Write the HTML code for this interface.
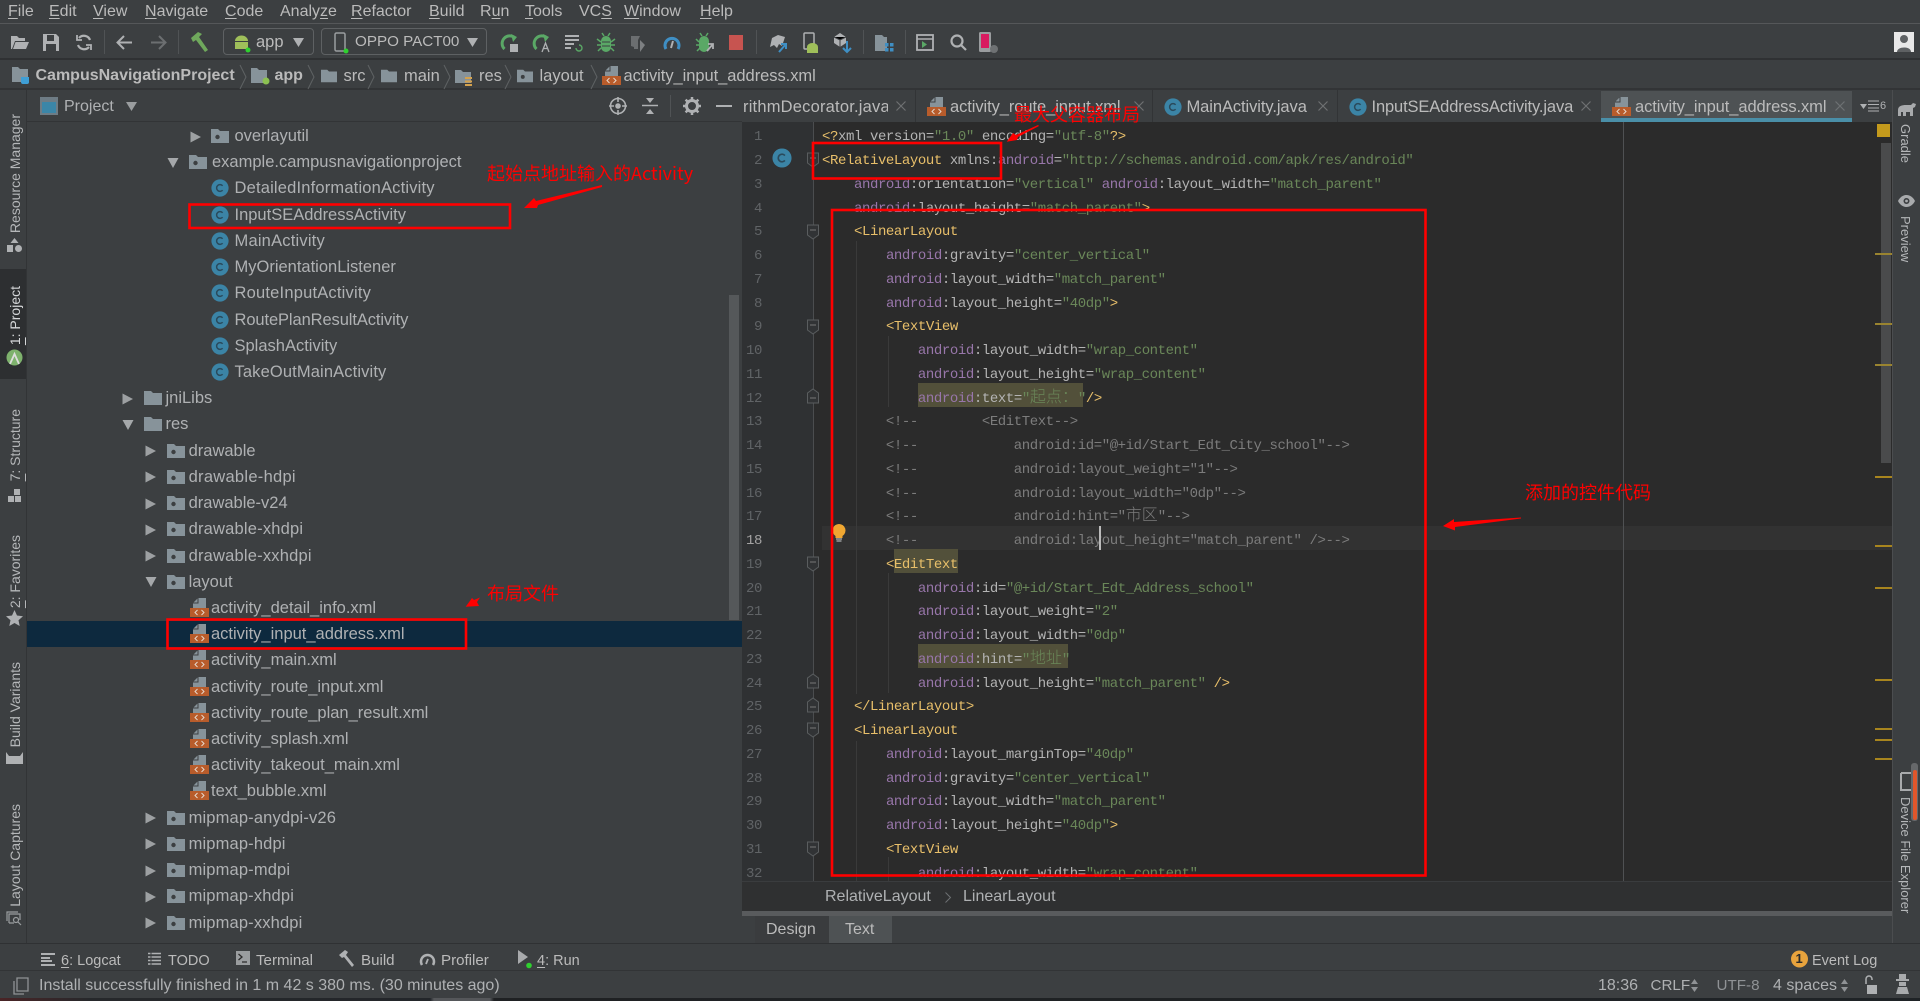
<!DOCTYPE html>
<html lang="zh"><head><meta charset="utf-8"><title>CampusNavigationProject</title>
<style>
html,body{margin:0;padding:0;background:#3c3f41;}
body{width:1920px;height:1001px;position:relative;overflow:hidden;font-family:"Liberation Sans","Noto Sans CJK SC",sans-serif;color:#bbbbbb;font-size:16px;}
.a{position:absolute;white-space:pre;}
.b{position:absolute;}
svg{position:absolute;overflow:visible;}
u{text-decoration:underline;text-underline-offset:2px;}
.mn{top:1px;line-height:21px;font-size:16px;color:#bbb;}
.nv{top:62px;line-height:28px;font-size:16.5px;color:#bbb;}
.nb{font-weight:bold;font-size:16px;}
.chev{top:66px;}
.tabt{top:93px;line-height:28px;font-size:16.5px;color:#bbb;letter-spacing:-.08px;}
.r{height:26.23px;line-height:26px;position:relative;font-size:16.5px;color:#afb1b3;white-space:pre;}
.r span{position:absolute;top:0;}
.r svg{top:4px;width:18px;height:18px;}
.r svg.ar{top:7.5px;width:12px;height:12px;}
.l1 .ar{left:122px}.l1 .ic{left:144px}.l1 span{left:165.5px}
.l2 .ar{left:145px}.l2 .ic{left:166.5px}.l2 span{left:188.6px}
.l3 .ar{left:167px}.l3 .ic{left:189px}.l3 span{left:212px}
.l4 .ar{left:190px}.l4 .ic{left:211px}.l4 span{left:234.5px}
.lx .ic{left:189.5px;top:3px;}.lx span{left:211px}
.sel{background:#0d293e;}
.code{position:absolute;left:822px;top:122.1px;width:1050px;height:759px;overflow:hidden;font-family:"Liberation Mono","Noto Sans CJK SC",monospace;font-size:14px;letter-spacing:-.41px;color:#b4b4b4;}
.l{height:23.76px;line-height:27px;white-space:pre;position:relative;top:2.4px;}
.g{color:#e8bf6a}.p{color:#9876aa}.v{color:#6a8759}.c{color:#7c7c7c}
.z{font-family:"Noto Sans CJK SC",sans-serif;font-size:16px;letter-spacing:0;font-weight:300;line-height:1px;}
.nums{position:absolute;left:730px;width:32px;top:122.1px;text-align:right;font-family:"Liberation Mono",monospace;font-size:14px;letter-spacing:-.4px;color:#606366;height:759px;overflow:hidden;}
.v1{position:absolute;writing-mode:vertical-rl;transform:rotate(180deg);white-space:pre;font-size:14px;color:#b5b7b9;line-height:20px;left:5px;}
.v2{position:absolute;writing-mode:vertical-rl;white-space:pre;font-size:13px;color:#b5b7b9;line-height:20px;left:1895px;}
.bt{top:948px;line-height:26px;font-size:14.5px;color:#bbb;}
.st{top:973px;line-height:26px;font-size:16px;color:#afb1b3;}
.ann{position:absolute;color:#f00;font-size:18px;line-height:22px;white-space:pre;font-family:"Noto Sans CJK SC",sans-serif;font-weight:400;}
.combo{position:absolute;top:28px;height:27px;border:1px solid #5e6163;border-radius:4px;box-sizing:border-box;}
.sep{position:absolute;width:1px;background:#505355;}
</style></head><body>
<svg width="0" height="0" style="position:absolute">
<defs>
<symbol id="ra" viewBox="0 0 12 12"><path d="M.5.5L11 6 .5 11.5z" fill="#9da0a2"/></symbol>
<symbol id="da" viewBox="0 0 12 12"><path d="M.5 1h11L6 11z" fill="#a5a8aa"/></symbol>
<symbol id="pk" viewBox="0 0 18 18"><path d="M0 2h7l2 2h9v12H0z" fill="#87939a"/><circle cx="6.5" cy="10" r="2.2" fill="#3c3f41"/></symbol>
<symbol id="fd" viewBox="0 0 18 18"><path d="M0 2h7l2 2h9v12H0z" fill="#87939a"/></symbol>
<symbol id="cl" viewBox="0 0 18 18"><circle cx="9" cy="9" r="8.6" fill="#3b84a6"/><path d="M11.6 6.8A3.4 3.4 0 1 0 11.6 11.2" fill="none" stroke="#2a4a5c" stroke-width="1.5"/></symbol>
<symbol id="xm" viewBox="0 0 19 19"><path d="M3 10V5l5-5h8v10z" fill="#87939a"/><path d="M3 5h5V0" fill="none" stroke="#3c3f41"/><rect y="10" width="19" height="9" fill="#b85c2b"/><path d="M7.5 12l-2.5 2.5 2.5 2.5M11.5 12l2.5 2.5-2.5 2.5" fill="none" stroke="#e6d8cc" stroke-width="1"/></symbol>
<symbol id="xx" viewBox="0 0 10 10"><path d="M.5.5l9 9M9.5.5l-9 9" stroke="#6e7173" stroke-width="1.2" fill="none"/></symbol>
<symbol id="fo" viewBox="0 0 14 16"><path d="M1.5 1v10l5.5 4 5.500-4V1z" fill="#313335" stroke="#5a5d5f"/><path d="M4 6h6" stroke="#777"/></symbol>
<symbol id="fc" viewBox="0 0 14 16"><path d="M1.5 15V5L7 1l5.500 4v10z" fill="#313335" stroke="#5a5d5f"/><path d="M4 10h6" stroke="#777"/></symbol>
<symbol id="ch" viewBox="0 0 8 26"><path d="M1 1l6 12-6 12" fill="none" stroke="#5f6264" stroke-width="1"/></symbol>
</defs></svg>

<!-- menu -->
<div class="b" style="left:0;top:23px;width:1920px;height:1px;background:#555759"></div>
<div class="a mn" style="left:8px"><u>F</u>ile</div>
<div class="a mn" style="left:49px"><u>E</u>dit</div>
<div class="a mn" style="left:93px"><u>V</u>iew</div>
<div class="a mn" style="left:145px"><u>N</u>avigate</div>
<div class="a mn" style="left:225px"><u>C</u>ode</div>
<div class="a mn" style="left:280px">Analy<u>z</u>e</div>
<div class="a mn" style="left:351px"><u>R</u>efactor</div>
<div class="a mn" style="left:429px"><u>B</u>uild</div>
<div class="a mn" style="left:480px">R<u>u</u>n</div>
<div class="a mn" style="left:525px"><u>T</u>ools</div>
<div class="a mn" style="left:579px">VC<u>S</u></div>
<div class="a mn" style="left:624px"><u>W</u>indow</div>
<div class="a mn" style="left:700px"><u>H</u>elp</div>

<!-- toolbar -->
<div class="b" style="left:0;top:58px;width:1920px;height:2px;background:#2f3133"></div>
<svg style="left:11px;top:34px" width="18" height="16"><path d="M0 2h6l2 2h6v3H4L1 15H0zM4.500 8H18l-3 7H2z" fill="#afb1b3"/></svg>
<svg style="left:43px;top:34px" width="16" height="17"><path d="M0 0h13l3 3v14H0z" fill="#afb1b3"/><rect x="4" y="1" width="7" height="6" fill="#3c3f41"/><rect x="3" y="10" width="10" height="7" fill="#3c3f41"/></svg>
<svg style="left:76px;top:34px" width="16" height="17" fill="none" stroke="#afb1b3" stroke-width="2.200"><path d="M14 6A6.500 6.500 0 0 0 3 4M2 11a6.500 6.500 0 0 0 11 2"/><path d="M1 1v5h5M15 16v-5h-5" stroke-width="1.800"/></svg>
<div class="sep" style="left:104px;top:30px;height:24px"></div>
<svg style="left:116px;top:35px" width="16" height="15" fill="none" stroke="#afb1b3" stroke-width="2"><path d="M16 7.500H2M8 1L1.500 7.500 8 14"/></svg>
<svg style="left:151px;top:35px" width="16" height="15" fill="none" stroke="#6c6f71" stroke-width="2"><path d="M0 7.500h14M8 1l6.500 6.500L8 14"/></svg>
<div class="sep" style="left:178px;top:30px;height:24px"></div>
<svg style="left:190px;top:32px" width="20" height="21"><path d="M1 6L8 0l4 2-3 3 9 13-3 2L6 8 3 10z" fill="#6fa85c"/></svg>
<div class="combo" style="left:223px;width:91px"></div>
<svg style="left:233px;top:35px" width="17" height="18"><path d="M2 6a6.500 5.500 0 0 1 13 0zM2 7h13v7H2z" fill="#9fbf5a"/><circle cx="15" cy="15" r="2.500" fill="#2fd12f"/></svg>
<div class="a" style="left:256px;top:28px;line-height:28px;font-size:16.5px">app</div>
<svg style="left:293px;top:38px" width="12" height="9"><path d="M0 0h11L5.500 9z" fill="#afb1b3"/></svg>
<div class="combo" style="left:321px;width:166px"></div>
<svg style="left:334px;top:32px" width="14" height="22"><rect x="1" y="1" width="10" height="18" rx="1.500" fill="none" stroke="#9a9d9f" stroke-width="1.500"/><circle cx="12" cy="19" r="2.500" fill="#2fd12f"/></svg>
<div class="a" style="left:355px;top:28px;line-height:28px;font-size:15.2px">OPPO PACT00</div>
<svg style="left:467px;top:38px" width="12" height="9"><path d="M0 0h11L5.500 9z" fill="#afb1b3"/></svg>
<svg style="left:501px;top:33px" width="19" height="20" fill="none"><path d="M14 5A7 7 0 1 0 3.500 16" stroke="#5aa866" stroke-width="3"/><path d="M10 1l6 3-4 5z" fill="#5aa866"/><rect x="9" y="11" width="8" height="8" fill="#afb1b3"/></svg>
<svg style="left:533px;top:33px" width="19" height="20" fill="none"><path d="M14 5A7 7 0 1 0 3.500 16" stroke="#5aa866" stroke-width="3"/><path d="M10 1l6 3-4 5z" fill="#5aa866"/><path d="M9 19l3.500-9 3.500 9M10.500 15.500h4" stroke="#afb1b3" stroke-width="1.300"/></svg>
<svg style="left:565px;top:34px" width="18" height="18" fill="none" stroke="#afb1b3" stroke-width="2"><path d="M0 2h14M0 6h14M0 10h9M0 14h6"/><path d="M11 14a3 3 0 1 0 3-3" stroke="#5aa866" stroke-width="1.400"/></svg>
<svg style="left:597px;top:33px" width="18" height="19"><path d="M9 3a5 5 0 0 1 5 5v6a5 5 0 0 1-10 0V8a5 5 0 0 1 5-5z" fill="#5aa866"/><path d="M0 6l4 3M18 6l-4 3M0 12h4M18 12h-4M1 18l3-3M17 18l-3-3M5 0l2 3M13 0l-2 3" stroke="#5aa866" stroke-width="1.500"/><path d="M5 9h8M5 13h8" stroke="#3c3f41"/></svg>
<svg style="left:630px;top:33px" width="17" height="20"><path d="M1 3h9l-2 4v9H4v-2L1 13z" fill="#6b6e70"/><path d="M10 7l5 5-5 7z" fill="#7d8082"/></svg>
<svg style="left:663px;top:34px" width="18" height="17" fill="none"><path d="M3 15A7 7 0 1 1 15 15" stroke="#3f8fc4" stroke-width="3"/><path d="M8 14l2-7" stroke="#afb1b3" stroke-width="2"/></svg>
<svg style="left:696px;top:33px" width="19" height="20"><path d="M8 3a5 5 0 0 1 5 5v6a5 5 0 0 1-10 0V8a5 5 0 0 1 5-5z" fill="#5aa866"/><path d="M0 6l3 3M0 12h3M1 18l3-3M4 0l2 3M12 0l-2 3" stroke="#5aa866" stroke-width="1.500"/><path d="M11 18l6-7M12 11h5v5" stroke="#afb1b3" stroke-width="1.800" fill="none"/></svg>
<div class="b" style="left:729px;top:35px;width:14px;height:15px;background:#c75450"></div>
<div class="sep" style="left:756px;top:30px;height:24px"></div>
<svg style="left:768px;top:33px" width="21" height="20"><path d="M2 14l2-9 6-3 7 2-3 9-3-2-2 4-3-3z" fill="#afb1b3"/><path d="M11 19l7-8M13 11h5v5" stroke="#3f8fc4" stroke-width="2" fill="none"/></svg>
<svg style="left:803px;top:32px" width="18" height="22"><rect x="1" y="1" width="10" height="16" rx="1" fill="none" stroke="#afb1b3" stroke-width="1.500"/><path d="M4 21v-6a5.500 4 0 0 1 11 0v6z" fill="#9fbf5a"/></svg>
<svg style="left:833px;top:32px" width="19" height="22"><path d="M1 5l6-4 6 4v6l-6 4-6-4z" fill="#afb1b3"/><path d="M7 7v8M1 5l6 3 6-3" stroke="#3c3f41"/><path d="M14 9v11M10 16l4 4 4-4" stroke="#3f8fc4" stroke-width="2" fill="none"/></svg>
<div class="sep" style="left:863px;top:30px;height:24px"></div>
<svg style="left:875px;top:34px" width="19" height="18"><path d="M0 1h7l2 2h3v14H0z" fill="#87939a"/><rect x="10" y="9" width="3.500" height="3.500" fill="#3f8fc4"/><rect x="15" y="9" width="3.500" height="3.500" fill="#3f8fc4"/><rect x="10" y="14" width="3.500" height="3.500" fill="#3f8fc4"/><rect x="15" y="14" width="3.500" height="3.500" fill="#3f8fc4"/></svg>
<div class="sep" style="left:905px;top:30px;height:24px"></div>
<svg style="left:916px;top:34px" width="18" height="17"><rect x="1" y="1" width="16" height="15" fill="none" stroke="#afb1b3" stroke-width="1.800"/><path d="M1 5h16" stroke="#afb1b3" stroke-width="1.500"/><path d="M6 7l5 3.500L6 14z" fill="#5aa866"/></svg>
<svg style="left:950px;top:34px" width="17" height="17" fill="none" stroke="#afb1b3" stroke-width="2.200"><circle cx="7" cy="7" r="5.500"/><path d="M11 11l5 5"/></svg>
<svg style="left:979px;top:32px" width="20" height="22"><rect x="0" y="0" width="12" height="20" rx="1.500" fill="#9a9d9f"/><rect x="2" y="2" width="8" height="14" fill="#d81b60"/><circle cx="15" cy="17" r="4" fill="#6e7173"/></svg>
<svg style="left:1894px;top:32px" width="20" height="20"><rect width="20" height="20" fill="#e8e8e8"/><circle cx="10" cy="7" r="4" fill="#5e6163"/><path d="M3 20c0-6 14-6 14 0z" fill="#5e6163"/></svg>

<!-- nav bar -->
<div class="b" style="left:0;top:88px;width:1920px;height:2px;background:#323436"></div>
<svg style="left:12px;top:67px" width="20" height="19"><path d="M0 0h6l2 2h8v13H0z" fill="#87939a"/><path d="M9 10h8v5a2 2 0 0 1-2 2h-4a2 2 0 0 1-2-2z" fill="#3f9fd6"/></svg>
<div class="a nv nb" style="left:35.500px">CampusNavigationProject</div>
<svg class="chev" style="left:239px;top:64px" width="8" height="26"><use href="#ch"/></svg>
<svg style="left:251px;top:68px" width="19" height="17"><path d="M0 0h6l2 2h8v13H0z" fill="#87939a"/><circle cx="15" cy="13" r="3.500" fill="#8cc152"/></svg>
<div class="a nv nb" style="left:274.500px">app</div>
<svg style="left:307px;top:64px" width="8" height="26"><use href="#ch"/></svg>
<svg style="left:320px;top:68px" width="18" height="16"><use href="#fd"/></svg>
<div class="a nv" style="left:343.500px">src</div>
<svg style="left:367px;top:64px" width="8" height="26"><use href="#ch"/></svg>
<svg style="left:380px;top:68px" width="18" height="16"><use href="#fd"/></svg>
<div class="a nv" style="left:404px">main</div>
<svg style="left:443px;top:64px" width="8" height="26"><use href="#ch"/></svg>
<svg style="left:455px;top:68px" width="19" height="18"><path d="M0 2h6l2 2h8v11H0z" fill="#87939a"/><path d="M10 9h7v2h-7zM10 12.500h7v2h-7zM10 16h7v2h-7z" fill="#d4a24e"/></svg>
<div class="a nv" style="left:479px">res</div>
<svg style="left:504px;top:64px" width="8" height="26"><use href="#ch"/></svg>
<svg style="left:516px;top:68px" width="18" height="16"><use href="#pk"/></svg>
<div class="a nv" style="left:539.500px">layout</div>
<svg style="left:590px;top:64px" width="8" height="26"><use href="#ch"/></svg>
<svg style="left:602px;top:66px" width="19" height="19"><use href="#xm"/></svg>
<div class="a nv" style="left:623.500px;letter-spacing:-.05px">activity_input_address.xml</div>

<!-- tool strip left -->
<div class="b" style="left:26px;top:90px;width:1px;height:853px;background:#323436"></div>
<div class="b" style="left:0;top:269px;width:26px;height:110px;background:#2d2f31"></div>
<div class="v1" style="top:114px">Resource Manager</div>
<svg style="left:7px;top:238px" width="15" height="14"><path d="M7.500 0l4 5h-8z M0 7h6v7H0z" fill="#afb1b3"/><circle cx="11.500" cy="10.500" r="3.500" fill="#afb1b3"/></svg>
<div class="v1" style="top:286px;color:#d5d7d9"><u>1</u>: Project</div>
<svg style="left:6px;top:349px" width="17" height="17"><circle cx="8.500" cy="8.500" r="8" fill="#7eb26d"/><path d="M4 15l4.500-10L13 15" fill="none" stroke="#ddd" stroke-width="1.800"/></svg>
<div class="v1" style="top:409px"><u>7</u>: Structure</div>
<svg style="left:8px;top:489px" width="14" height="13"><path d="M6 0h6v6H6zM0 7h6v6H0zM7 7h6v6H7z" fill="#afb1b3"/></svg>
<div class="v1" style="top:535px"><u>2</u>: Favorites</div>
<svg style="left:6px;top:610px" width="17" height="16"><path d="M8.500 0l2.500 5.500 6 .7-4.500 4 1.200 5.800-5.200-3-5.200 3 1.200-5.800L0 6.200l6-.7z" fill="#afb1b3"/></svg>
<div class="v1" style="top:662px">Build Variants</div>
<svg style="left:6px;top:752px" width="17" height="12"><path d="M0 0l3 4h11l3-4v12H0z" fill="#afb1b3"/></svg>
<div class="v1" style="top:804px">Layout Captures</div>
<svg style="left:6px;top:911px" width="17" height="15" fill="none" stroke="#9a9d9f" stroke-width="1.200"><path d="M1 10V1h11M3 12V3h11v6M8 12H3"/><circle cx="10" cy="9" r="2.500"/><path d="M12 11l3 3"/></svg>

<!-- project header -->
<div class="b" style="left:27px;top:121px;width:715px;height:1px;background:#323436"></div>
<svg style="left:40px;top:97px" width="18" height="18"><rect width="18" height="18" fill="#6e7c85"/><rect x="2" y="5" width="14" height="11" fill="#3b86a8"/></svg>
<div class="a" style="left:64px;top:93px;line-height:28px;font-size:16px;color:#afb1b3">Project</div>
<svg style="left:126px;top:102px" width="12" height="9"><path d="M0 0h11L5.500 9z" fill="#9a9d9f"/></svg>
<svg style="left:609px;top:97px" width="18" height="18" fill="none" stroke="#afb1b3" stroke-width="1.600"><circle cx="9" cy="9" r="7.500"/><circle cx="9" cy="9" r="2" fill="#afb1b3"/><path d="M9 0v5M9 13v5M0 9h5M13 9h5"/></svg>
<svg style="left:642px;top:97px" width="16" height="18"><path d="M0 8.500h16" stroke="#afb1b3" stroke-width="1.500"/><path d="M4 1h8L8 6zM4 17h8l-4-5z" fill="#afb1b3"/></svg>
<div class="sep" style="left:670px;top:95px;height:22px"></div>
<svg style="left:683px;top:97px" width="18" height="18"><circle cx="9" cy="9" r="5.500" fill="none" stroke="#afb1b3" stroke-width="3"/><path d="M9 0v4M9 14v4M0 9h4M14 9h4M2.600 2.600l3 3M12.400 12.400l3 3M15.400 2.600l-3 3M5.600 12.400l-3 3" stroke="#afb1b3" stroke-width="2.500"/></svg>
<div class="b" style="left:716px;top:105px;width:16px;height:2px;background:#afb1b3"></div>

<!-- tree -->
<div class="b" style="left:27px;top:122px;width:715px;height:821px;overflow:hidden">
<div class="b" style="left:-27px;top:1px;width:742px">
<div class="r l4"><svg class="ar"><use href="#ra"/></svg><svg class="ic"><use href="#pk"/></svg><span>overlayutil</span></div>
<div class="r l3"><svg class="ar"><use href="#da"/></svg><svg class="ic"><use href="#pk"/></svg><span>example.campusnavigationproject</span></div>
<div class="r l4"><svg class="ic"><use href="#cl"/></svg><span style="letter-spacing:.18px">DetailedInformationActivity</span></div>
<div class="r l4"><svg class="ic"><use href="#cl"/></svg><span>InputSEAddressActivity</span></div>
<div class="r l4"><svg class="ic"><use href="#cl"/></svg><span style="letter-spacing:.2px">MainActivity</span></div>
<div class="r l4"><svg class="ic"><use href="#cl"/></svg><span>MyOrientationListener</span></div>
<div class="r l4"><svg class="ic"><use href="#cl"/></svg><span style="letter-spacing:.2px">RouteInputActivity</span></div>
<div class="r l4"><svg class="ic"><use href="#cl"/></svg><span style="letter-spacing:-.1px">RoutePlanResultActivity</span></div>
<div class="r l4"><svg class="ic"><use href="#cl"/></svg><span>SplashActivity</span></div>
<div class="r l4"><svg class="ic"><use href="#cl"/></svg><span style="letter-spacing:.13px">TakeOutMainActivity</span></div>
<div class="r l1"><svg class="ar"><use href="#ra"/></svg><svg class="ic"><use href="#fd"/></svg><span>jniLibs</span></div>
<div class="r l1"><svg class="ar"><use href="#da"/></svg><svg class="ic"><use href="#fd"/></svg><span>res</span></div>
<div class="r l2"><svg class="ar"><use href="#ra"/></svg><svg class="ic"><use href="#pk"/></svg><span>drawable</span></div>
<div class="r l2"><svg class="ar"><use href="#ra"/></svg><svg class="ic"><use href="#pk"/></svg><span style="letter-spacing:.28px">drawable-hdpi</span></div>
<div class="r l2"><svg class="ar"><use href="#ra"/></svg><svg class="ic"><use href="#pk"/></svg><span>drawable-v24</span></div>
<div class="r l2"><svg class="ar"><use href="#ra"/></svg><svg class="ic"><use href="#pk"/></svg><span style="letter-spacing:.2px">drawable-xhdpi</span></div>
<div class="r l2"><svg class="ar"><use href="#ra"/></svg><svg class="ic"><use href="#pk"/></svg><span style="letter-spacing:.2px">drawable-xxhdpi</span></div>
<div class="r l2"><svg class="ar"><use href="#da"/></svg><svg class="ic"><use href="#pk"/></svg><span>layout</span></div>
<div class="r lx"><svg class="ic" style="width:19px;height:19px"><use href="#xm"/></svg><span>activity_detail_info.xml</span></div>
<div class="r lx sel"><svg class="ic" style="width:19px;height:19px"><use href="#xm"/></svg><span>activity_input_address.xml</span></div>
<div class="r lx"><svg class="ic" style="width:19px;height:19px"><use href="#xm"/></svg><span>activity_main.xml</span></div>
<div class="r lx"><svg class="ic" style="width:19px;height:19px"><use href="#xm"/></svg><span>activity_route_input.xml</span></div>
<div class="r lx"><svg class="ic" style="width:19px;height:19px"><use href="#xm"/></svg><span>activity_route_plan_result.xml</span></div>
<div class="r lx"><svg class="ic" style="width:19px;height:19px"><use href="#xm"/></svg><span>activity_splash.xml</span></div>
<div class="r lx"><svg class="ic" style="width:19px;height:19px"><use href="#xm"/></svg><span>activity_takeout_main.xml</span></div>
<div class="r lx"><svg class="ic" style="width:19px;height:19px"><use href="#xm"/></svg><span>text_bubble.xml</span></div>
<div class="r l2"><svg class="ar"><use href="#ra"/></svg><svg class="ic"><use href="#pk"/></svg><span style="letter-spacing:.15px">mipmap-anydpi-v26</span></div>
<div class="r l2"><svg class="ar"><use href="#ra"/></svg><svg class="ic"><use href="#pk"/></svg><span style="letter-spacing:.15px">mipmap-hdpi</span></div>
<div class="r l2"><svg class="ar"><use href="#ra"/></svg><svg class="ic"><use href="#pk"/></svg><span style="letter-spacing:.15px">mipmap-mdpi</span></div>
<div class="r l2"><svg class="ar"><use href="#ra"/></svg><svg class="ic"><use href="#pk"/></svg><span style="letter-spacing:.15px">mipmap-xhdpi</span></div>
<div class="r l2"><svg class="ar"><use href="#ra"/></svg><svg class="ic"><use href="#pk"/></svg><span style="letter-spacing:.15px">mipmap-xxhdpi</span></div>
</div></div>
<div class="b" style="left:729px;top:295px;width:10px;height:325px;background:#55585a"></div>

<!-- tabs -->
<div class="b" style="left:742px;top:90px;width:1150px;height:32px;background:#3c3f41"></div>
<div class="b" style="left:1601px;top:91px;width:251px;height:31px;background:#4e5254"></div>
<div class="b" style="left:1601px;top:118px;width:251px;height:4px;background:#4a8fa8"></div>
<div class="sep" style="left:915px;top:90px;height:32px;background:#323436"></div>
<div class="sep" style="left:1152px;top:90px;height:32px;background:#323436"></div>
<div class="sep" style="left:1337px;top:90px;height:32px;background:#323436"></div>
<div class="b" style="left:742px;top:93px;width:146px;height:28px;overflow:hidden"><div class="a tabt" style="left:1px;top:0;letter-spacing:.2px">rithmDecorator.java</div></div>
<svg style="left:896px;top:101px" width="10" height="10"><use href="#xx"/></svg>
<svg style="left:927px;top:97px" width="19" height="19"><use href="#xm"/></svg>
<div class="a tabt" style="left:950px">activity_route_input.xml</div>
<svg style="left:1134px;top:101px" width="10" height="10"><use href="#xx"/></svg>
<svg style="left:1164px;top:98px" width="18" height="18"><use href="#cl"/></svg>
<div class="a tabt" style="left:1186.500px">MainActivity.java</div>
<svg style="left:1318px;top:101px" width="10" height="10"><use href="#xx"/></svg>
<svg style="left:1349px;top:98px" width="18" height="18"><use href="#cl"/></svg>
<div class="a tabt" style="left:1371.500px;letter-spacing:-.13px">InputSEAddressActivity.java</div>
<svg style="left:1581px;top:101px" width="10" height="10"><use href="#xx"/></svg>
<svg style="left:1612px;top:97px" width="19" height="19"><use href="#xm"/></svg>
<div class="a tabt" style="left:1635px">activity_input_address.xml</div>
<svg style="left:1835px;top:101px" width="10" height="10"><use href="#xx"/></svg>
<svg style="left:1860px;top:104px" width="7" height="5"><path d="M0 0h7L3.500 5z" fill="#afb1b3"/></svg>
<svg style="left:1868px;top:100px" width="11" height="12"><path d="M0 1h11M0 4.500h11M0 8h11M0 11h11" stroke="#afb1b3" stroke-width="1"/></svg>
<div class="a" style="left:1880px;top:97px;line-height:18px;font-size:11px;color:#afb1b3">6</div>

<!-- editor -->
<div class="b" style="left:742px;top:122px;width:1150px;height:759px;background:#2b2b2b"></div>
<div class="b" style="left:742px;top:122px;width:71px;height:759px;background:#2f3133"></div>
<div class="b" style="left:822px;top:526px;width:1070px;height:23.500px;background:#323232"></div>
<div class="b" style="left:813px;top:122px;width:1px;height:759px;background:#4b4d4f"></div>
<div class="b" style="left:1623px;top:122px;width:1px;height:759px;background:#4f5153"></div>
<!-- indent guides -->
<div class="b" style="left:856px;top:241px;width:1px;height:453px;background:#3a3a3a"></div>
<div class="b" style="left:888px;top:336px;width:1px;height:71px;background:#3a3a3a"></div>
<div class="b" style="left:888px;top:573px;width:1px;height:120px;background:#3a3a3a"></div>
<div class="b" style="left:856px;top:741px;width:1px;height:140px;background:#3a3a3a"></div>
<div class="b" style="left:888px;top:857px;width:1px;height:24px;background:#3a3a3a"></div>
<!-- highlights -->
<div class="b" style="left:918px;top:383px;width:165px;height:24px;background:#52503a"></div>
<div class="b" style="left:894px;top:549px;width:64px;height:24px;background:#52503a"></div>
<div class="b" style="left:918px;top:644px;width:150px;height:24px;background:#52503a"></div>
<div class="nums">
<div class="l">1</div><div class="l">2</div><div class="l">3</div><div class="l">4</div><div class="l">5</div><div class="l">6</div><div class="l">7</div><div class="l">8</div><div class="l">9</div><div class="l">10</div><div class="l">11</div><div class="l">12</div><div class="l">13</div><div class="l">14</div><div class="l">15</div><div class="l">16</div><div class="l">17</div><div class="l" style="color:#a4a3a3">18</div><div class="l">19</div><div class="l">20</div><div class="l">21</div><div class="l">22</div><div class="l">23</div><div class="l">24</div><div class="l">25</div><div class="l">26</div><div class="l">27</div><div class="l">28</div><div class="l">29</div><div class="l">30</div><div class="l">31</div><div class="l">32</div>
</div>
<div class="code">
<div class="l"><span class="g">&lt;?</span>xml version=<span class="v">"1.0"</span> encoding=<span class="v">"utf-8"</span><span class="g">?&gt;</span></div>
<div class="l"><span class="g">&lt;RelativeLayout</span> xmlns:<span class="p">android</span>=<span class="v">"http://schemas.android.com/apk/res/android"</span></div>
<div class="l">    <span class="p">android</span>:orientation=<span class="v">"vertical"</span> <span class="p">android</span>:layout_width=<span class="v">"match_parent"</span></div>
<div class="l">    <span class="p">android</span>:layout_height=<span class="v">"match_parent"</span><span class="g">&gt;</span></div>
<div class="l">    <span class="g">&lt;LinearLayout</span></div>
<div class="l">        <span class="p">android</span>:gravity=<span class="v">"center_vertical"</span></div>
<div class="l">        <span class="p">android</span>:layout_width=<span class="v">"match_parent"</span></div>
<div class="l">        <span class="p">android</span>:layout_height=<span class="v">"40dp"</span><span class="g">&gt;</span></div>
<div class="l">        <span class="g">&lt;TextView</span></div>
<div class="l">            <span class="p">android</span>:layout_width=<span class="v">"wrap_content"</span></div>
<div class="l">            <span class="p">android</span>:layout_height=<span class="v">"wrap_content"</span></div>
<div class="l">            <span class="p">android</span>:text=<span class="v">"<span class="z">起点：</span>"</span><span class="g">/&gt;</span></div>
<div class="l c">        &lt;!--        &lt;EditText--&gt;</div>
<div class="l c">        &lt;!--            android:id="@+id/Start_Edt_City_school"--&gt;</div>
<div class="l c">        &lt;!--            android:layout_weight="1"--&gt;</div>
<div class="l c">        &lt;!--            android:layout_width="0dp"--&gt;</div>
<div class="l c">        &lt;!--            android:hint="<span class="z">市区</span>"--&gt;</div>
<div class="l c">        &lt;!--            android:layout_height="match_parent" /&gt;--&gt;</div>
<div class="l">        <span class="g">&lt;EditText</span></div>
<div class="l">            <span class="p">android</span>:id=<span class="v">"@+id/Start_Edt_Address_school"</span></div>
<div class="l">            <span class="p">android</span>:layout_weight=<span class="v">"2"</span></div>
<div class="l">            <span class="p">android</span>:layout_width=<span class="v">"0dp"</span></div>
<div class="l">            <span class="p">android</span>:hint=<span class="v">"<span class="z">地址</span>"</span></div>
<div class="l">            <span class="p">android</span>:layout_height=<span class="v">"match_parent"</span> <span class="g">/&gt;</span></div>
<div class="l">    <span class="g">&lt;/LinearLayout&gt;</span></div>
<div class="l">    <span class="g">&lt;LinearLayout</span></div>
<div class="l">        <span class="p">android</span>:layout_marginTop=<span class="v">"40dp"</span></div>
<div class="l">        <span class="p">android</span>:gravity=<span class="v">"center_vertical"</span></div>
<div class="l">        <span class="p">android</span>:layout_width=<span class="v">"match_parent"</span></div>
<div class="l">        <span class="p">android</span>:layout_height=<span class="v">"40dp"</span><span class="g">&gt;</span></div>
<div class="l">        <span class="g">&lt;TextView</span></div>
<div class="l">            <span class="p">android</span>:layout_width=<span class="v">"wrap_content"</span></div>
</div>
<div class="b" style="left:1099px;top:526px;width:2px;height:23.500px;background:#bbbbbb"></div>
<!-- fold marks -->
<svg style="left:806px;top:152px" width="14" height="16"><use href="#fo"/></svg>
<svg style="left:806px;top:224px" width="14" height="16"><use href="#fo"/></svg>
<svg style="left:806px;top:319px" width="14" height="16"><use href="#fo"/></svg>
<svg style="left:806px;top:388px" width="14" height="16"><use href="#fc"/></svg>
<svg style="left:806px;top:556px" width="14" height="16"><use href="#fo"/></svg>
<svg style="left:806px;top:673px" width="14" height="16"><use href="#fc"/></svg>
<svg style="left:806px;top:697px" width="14" height="16"><use href="#fc"/></svg>
<svg style="left:806px;top:722px" width="14" height="16"><use href="#fo"/></svg>
<svg style="left:806px;top:841px" width="14" height="16"><use href="#fo"/></svg>
<!-- gutter icons -->
<svg style="left:772px;top:148px" width="20" height="20"><use href="#cl"/></svg>
<svg style="left:832px;top:524px" width="14" height="19"><path d="M7 0a6.500 6.500 0 0 1 3.500 12v2h-7v-2A6.500 6.500 0 0 1 7 0z" fill="#f0a732"/><path d="M4 15h6M4.500 17h5" stroke="#afb1b3" stroke-width="1.200"/></svg>
<!-- error stripe -->
<div class="b" style="left:1881px;top:143px;width:10px;height:320px;background:#4a4b4c"></div>
<div class="b" style="left:1877px;top:124px;width:13px;height:13px;background:#c49a1c"></div>
<div class="b" style="left:1875px;top:253px;width:17px;height:2px;background:#9a8430"></div>
<div class="b" style="left:1875px;top:323px;width:17px;height:2px;background:#9a8430"></div>
<div class="b" style="left:1875px;top:364px;width:17px;height:2px;background:#9a8430"></div>
<div class="b" style="left:1875px;top:476px;width:17px;height:2px;background:#a8851e"></div>
<div class="b" style="left:1875px;top:545px;width:17px;height:2px;background:#a8851e"></div>
<div class="b" style="left:1875px;top:587px;width:17px;height:2px;background:#a8851e"></div>
<div class="b" style="left:1875px;top:679px;width:17px;height:2px;background:#a8851e"></div>
<div class="b" style="left:1875px;top:728px;width:17px;height:2px;background:#a8851e"></div>
<div class="b" style="left:1875px;top:739px;width:17px;height:2px;background:#a8851e"></div>
<div class="b" style="left:1875px;top:758px;width:17px;height:2px;background:#a8851e"></div>

<!-- breadcrumb -->
<div class="b" style="left:742px;top:881px;width:1150px;height:30px;background:#2f3031;border-top:1px solid #3a3c3e;box-sizing:border-box"></div>
<div class="a" style="left:825px;top:883px;line-height:28px;font-size:16px;color:#afb1b3">RelativeLayout</div>
<svg style="left:945px;top:892px" width="6" height="11"><path d="M.5.5l5 5-5 5" fill="none" stroke="#6e7173"/></svg>
<div class="a" style="left:963px;top:883px;line-height:28px;font-size:16px;color:#afb1b3">LinearLayout</div>
<div class="b" style="left:742px;top:911px;width:1150px;height:5px;background:#595b5d"></div>
<div class="b" style="left:755px;top:916px;width:74px;height:27px;background:#3a3c3e"></div>
<div class="b" style="left:829px;top:916px;width:63px;height:27px;background:#4e5254"></div>
<div class="a" style="left:766px;top:916px;line-height:28px;font-size:16px;color:#bbb">Design</div>
<div class="a" style="left:845px;top:916px;line-height:28px;font-size:16px;color:#bbb">Text</div>

<!-- right strip -->
<div class="b" style="left:1892px;top:90px;width:1px;height:853px;background:#4b4d4f"></div>
<svg style="left:1897px;top:102px" width="20" height="14"><path d="M1 14V8C1 4 5 3 9 3h5l2-2 3 1-1 3-2 1v8h-3v-4H9v4H6v-4H4v4z" fill="#a8aaac"/></svg>
<div class="v2" style="top:124px">Gradle</div>
<svg style="left:1898px;top:195px" width="17" height="12"><path d="M0 6c4-8 13-8 17 0-4 8-13 8-17 0z" fill="#a8aaac"/><circle cx="8.500" cy="6" r="3" fill="#3c3f41"/><circle cx="8.500" cy="6" r="1.400" fill="#a8aaac"/></svg>
<div class="v2" style="top:216px">Preview</div>
<div class="b" style="left:1911px;top:763px;width:7px;height:58px;background:#66686a;border-radius:3px"></div>
<div class="b" style="left:1913px;top:770px;width:4px;height:50px;background:#e0562b;border-radius:2px"></div>
<svg style="left:1900px;top:772px" width="13" height="19"><path d="M1 1h10M1 1v17h10" fill="none" stroke="#a8aaac" stroke-width="2"/></svg>
<div class="v2" style="top:797px">Device File Explorer</div>

<!-- bottom tool bar -->
<div class="b" style="left:0;top:943px;width:1920px;height:1px;background:#2f3133"></div>
<svg style="left:41px;top:953px" width="14" height="13"><path d="M0 1h14M0 5h9M0 8h11M0 12h14" stroke="#afb1b3" stroke-width="2"/></svg>
<div class="a bt" style="left:61px"><u>6</u>: Logcat</div>
<svg style="left:148px;top:952px" width="13" height="13"><path d="M0 1.500h13M0 5h13M0 8.500h13M0 12h13" stroke="#afb1b3" stroke-width="1.500" stroke-dasharray="2.500 1 12 0"/></svg>
<div class="a bt" style="left:168px">TODO</div>
<svg style="left:236px;top:951px" width="14" height="14"><rect width="14" height="14" fill="#9a9d9f"/><path d="M2.500 3l3.500 3-3.500 3M6 11h5" fill="none" stroke="#2b2b2b" stroke-width="1.300"/></svg>
<div class="a bt" style="left:256px;font-size:15.1px">Terminal</div>
<svg style="left:339px;top:950px" width="17" height="18"><path d="M0 5L6 0l3 2-2 3 8 10-2 2L5 7 3 8z" fill="#afb1b3"/></svg>
<div class="a bt" style="left:361px;font-size:15.1px">Build</div>
<svg style="left:419px;top:952px" width="17" height="14" fill="none"><path d="M3 13A6.500 6.500 0 1 1 14 13" stroke="#afb1b3" stroke-width="2.500"/><path d="M7 12l2-5" stroke="#afb1b3" stroke-width="1.800"/></svg>
<div class="a bt" style="left:441px;font-size:15.1px">Profiler</div>
<svg style="left:518px;top:950px" width="14" height="19"><path d="M0 0l10 7-10 7z" fill="#a8aaac"/><circle cx="11" cy="15.500" r="2.800" fill="#2fd12f"/></svg>
<div class="a bt" style="left:537px"><u>4</u>: Run</div>
<svg style="left:1791px;top:950px" width="17" height="18"><circle cx="8.500" cy="9" r="8.500" fill="#e8a33d"/></svg>
<div class="a" style="left:1795.500px;top:950px;line-height:18px;font-size:13px;color:#2b2b2b;font-weight:bold">1</div>
<div class="a bt" style="left:1812px">Event Log</div>

<!-- status bar -->
<div class="b" style="left:0;top:970px;width:1920px;height:1px;background:#323436"></div>
<svg style="left:13px;top:977px" width="16" height="18" fill="none" stroke="#8f9295" stroke-width="1.300"><path d="M1 4v13h10M4 1h11v13H4z"/></svg>
<div class="a st" style="left:39px">Install successfully finished in 1 m 42 s 380 ms. (30 minutes ago)</div>
<div class="a st" style="left:1598px">18:36</div>
<div class="a st" style="left:1650.500px;font-size:15.2px">CRLF</div>
<svg style="left:1691px;top:979px" width="7" height="13"><path d="M0 5L3.500 0 7 5zM0 8l3.500 5L7 8z" fill="#8f9295"/></svg>
<div class="a st" style="left:1716.500px;color:#8f9295;font-size:15.2px">UTF-8</div>
<div class="a st" style="left:1773px">4 spaces</div>
<svg style="left:1841px;top:979px" width="7" height="13"><path d="M0 5L3.500 0 7 5zM0 8l3.500 5L7 8z" fill="#8f9295"/></svg>
<svg style="left:1864px;top:975px" width="13" height="20"><path d="M2 9V4a3 3 0 0 1 6 0v1" fill="none" stroke="#afb1b3" stroke-width="1.500"/><rect x="3" y="10" width="10" height="9" fill="#afb1b3"/></svg>
<svg style="left:1896px;top:974px" width="13" height="21"><path d="M3 0h7v5h3v2H0V5h3zM3 8h7v4H3zM2 13h9l2 7H0z" fill="#a8aaac"/></svg>

<!-- desktop strip -->
<div class="b" style="left:0;top:998px;width:1920px;height:3px;background:linear-gradient(90deg,#4a2426 0,#26282b 90px,#23262a 430px,#55575a 434px,#55575a 490px,#1f2123 494px,#1f2326 100%)"></div>

<!-- annotations -->
<div class="ann" style="left:1014px;top:103px">最大父容器布局</div>
<div class="ann" style="left:487px;top:162px">起始点地址输入的Activity</div>
<div class="ann" style="left:487px;top:582px">布局文件</div>
<div class="ann" style="left:1525px;top:481px">添加的控件代码</div>
<svg style="left:0;top:0" width="1920" height="1001" fill="#f00">
<g fill="none" stroke="#f00" stroke-width="2.600">
<rect x="813" y="143" width="188" height="35.500"/>
<rect x="832" y="210" width="593.500" height="665.500"/>
<rect x="189.500" y="204.500" width="320.500" height="23.500"/>
<rect x="167.500" y="619.500" width="298.500" height="29"/>
</g>
<polygon points="1443,526 1454,519 1454,522 1521,517.500 1521,518.500 1455,527 1455,530.500"/>
<polygon points="524,208 534,198 536,201 602,185 602,187 538,205 537,208"/>
<polygon points="465.700,606.700 472,598 474,600 480,597.500 477,602 479,606"/>
<polygon points="1006.700,141.700 1013,133 1016,135 1038,125 1039,126 1018,137 1017,140"/>
</svg>
</body></html>
